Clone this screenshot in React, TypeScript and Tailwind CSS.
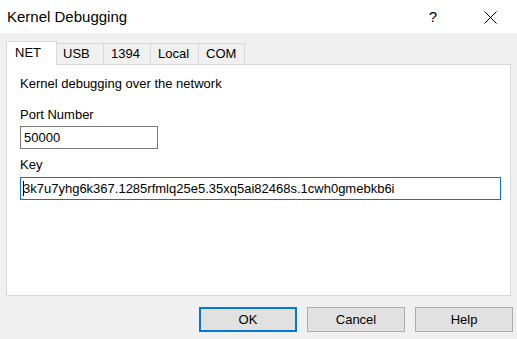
import React from "react";

const font = { fontFamily: '"Liberation Sans", Arial, sans-serif' };

export default function App() {
  const tabs = [
    { t: "USB", w: 47, pl: 6 },
    { t: "1394", w: 47, pl: 7 },
    { t: "Local", w: 48, pl: 7 },
    { t: "COM", w: 46, pl: 7 },
  ];
  return (
    <div className="w-[517px] h-[339px] bg-[#f0f0f0] flex flex-col text-black text-[13px] leading-[16px] overflow-hidden" style={font}>
      <div className="h-[33px] bg-white flex items-center pl-[7px] shrink-0">
        <div className="text-[15px] leading-[18px] flex-1 pt-[1px]">Kernel Debugging</div>
        <div className="text-[15px] leading-[18px] mr-[47px] pt-[1px]">?</div>
        <svg width="13" height="13" viewBox="0 0 13 13" className="mr-[20px] mt-[1px]">
          <path d="M0.5 0.5 L12.5 12.5 M12.5 0.5 L0.5 12.5" stroke="#000" strokeWidth="1" />
        </svg>
      </div>
      <div className="pl-[6px] pt-[8px] flex flex-col">
        <div className="flex items-end h-[23px] relative z-10">
          <div className="w-[51px] h-[24px] bg-white border border-b-0 border-[#d9d9d9] pl-[8px] pt-[3px] relative top-[1px]">NET</div>
          {tabs.map((x) => (
            <div key={x.t} className="h-[21px] border border-l-0 border-b-0 border-[#d9d9d9] pt-[2px]" style={{ width: x.w, paddingLeft: x.pl }}>{x.t}</div>
          ))}
        </div>
        <div className="w-[505px] h-[232px] bg-white border border-[#d9d9d9] pl-[13px] pt-[11px] flex flex-col">
          <div>Kernel debugging over the network</div>
          <div className="mt-[15px]">Port Number</div>
          <div className="mt-[3px] w-[138px] h-[23px] border border-[#7a7a7a] px-[3px] flex items-center">50000</div>
          <div className="mt-[8px]">Key</div>
          <div className="mt-[4px] w-[481px] h-[23px] border border-[#0078d7] px-[2px] flex items-center">
            <span className="w-px h-[15px] bg-black -mr-px"></span>3k7u7yhg6k367.1285rfmlq25e5.35xq5ai82468s.1cwh0gmebkb6i
          </div>
        </div>
      </div>
      <div className="flex gap-[10px] pl-[199px] mt-[11px]">
        <div className="w-[98px] h-[25px] bg-[#e1e1e1] border-2 border-[#0078d7] flex items-center justify-center">OK</div>
        <div className="w-[98px] h-[25px] bg-[#e1e1e1] border border-[#adadad] flex items-center justify-center">Cancel</div>
        <div className="w-[98px] h-[25px] bg-[#e1e1e1] border border-[#adadad] flex items-center justify-center">Help</div>
      </div>
    </div>
  );
}
